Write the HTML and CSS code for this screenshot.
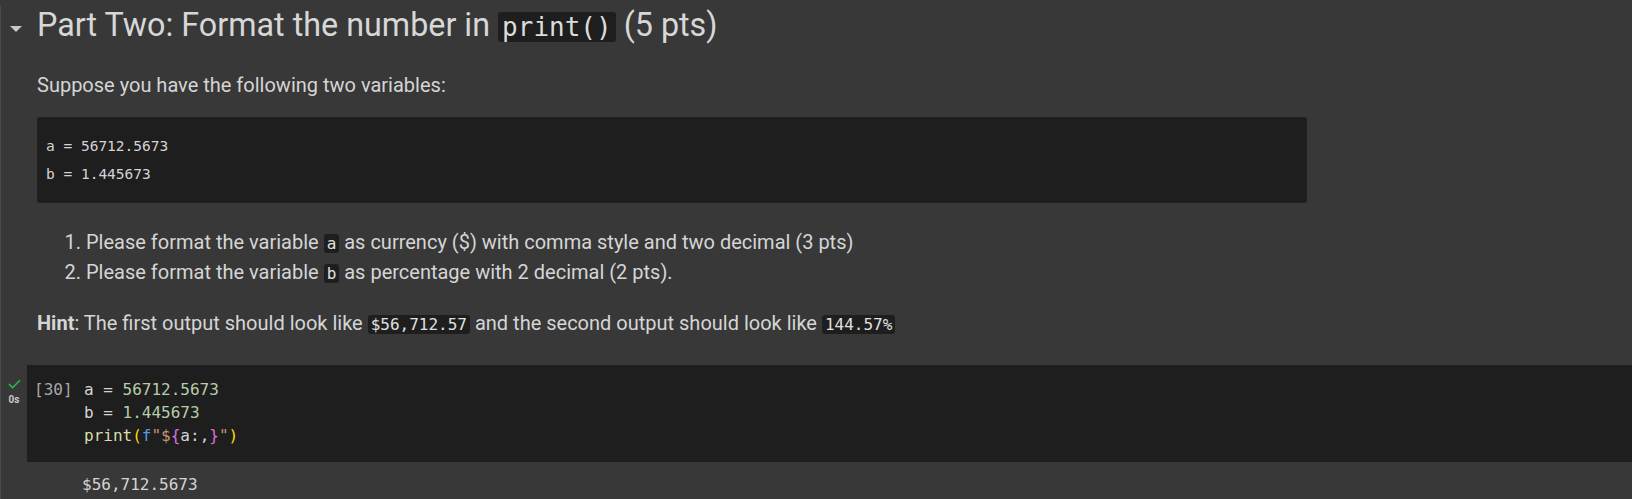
FILE: index.html
```html
<!DOCTYPE html>
<html>
<head>
<meta charset="utf-8">
<link rel="stylesheet" href="styles.css">
</head>
<body>
<div class="nb">
  <div class="md-cell">
    <div class="md-head">
      <div class="caret-col"><span class="caret"></span></div>
      <h2 class="title">Part Two: Format the number in <code class="chip-h">print()</code> (5 pts)</h2>
    </div>
    <div class="md-body">
      <p class="p1">Suppose you have the following two variables:</p>
      <pre class="md-code">a = 56712.5673
b = 1.445673</pre>
      <ol class="tasks">
        <li>Please format the variable <code class="chip">a</code> as currency ($) with comma style and two decimal (3 pts)</li>
        <li>Please format the variable <code class="chip">b</code> as percentage with 2 decimal (2 pts).</li>
      </ol>
      <p class="hint"><b>Hint</b>: The first output should look like <code class="chip">$56,712.57</code> and the second output should look like <code class="chip">144.57%</code></p>
    </div>
  </div>
  <div class="code-cell">
    <div class="gutter">
      <svg class="check" width="13" height="10" viewBox="0 0 13 10"><path d="M1 5.2 L4.6 8.6 L12 1.2" fill="none" stroke="#2fb152" stroke-width="1.6"/></svg>
      <span class="dur">0s</span>
    </div>
    <div class="cell-body">
      <div class="input">
        <span class="prompt">[30]</span>
<pre class="src"><span class="v">a</span> = <span class="n">56712.5673</span>
<span class="v">b</span> = <span class="n">1.445673</span>
<span class="fn">print</span><span class="p1c">(</span><span class="kw">f</span><span class="s">"$</span><span class="br">{</span><span class="v">a</span>:,<span class="br">}</span><span class="s">"</span><span class="p1c">)</span></pre>
      </div>
      <div class="output"><pre class="out">$56,712.5673</pre></div>
    </div>
  </div>
</div>
</body>
</html>
```

FILE: styles.css
```css
html, body {
  margin: 0;
  padding: 0;
  background: #383838;
  overflow: hidden;
}
body {
  font-family: Roboto, "Noto Sans", Arial, sans-serif;
  color: #d5d5d5;
}
.nb {
  border-left: 1px solid #4a4a4a;
  height: 499px;
  box-sizing: border-box;
}
.md-head {
  display: flex;
  align-items: flex-start;
  margin-top: 5px;
}
.caret-col {
  width: 36px;
  flex: none;
}
.caret {
  display: block;
  width: 0;
  height: 0;
  margin: 21px 0 0 9px;
  border-left: 6px solid transparent;
  border-right: 6px solid transparent;
  border-top: 6px solid #c8c8c8;
}
.title {
  margin: 0;
  font-size: 32.3px;
  font-weight: 400;
  line-height: 40px;
  color: #d7d7d7;
  white-space: nowrap;
}
.chip-h {
  font-family: "DejaVu Sans Mono", "Liberation Mono", monospace;
  font-size: 26px;
  line-height: 26px;
  background: #1e1e1e;
  border-radius: 3px;
  padding: 0 4px;
  color: #dcdcdc;
}
.md-body {
  padding-left: 36px;
}
.p1 {
  margin: 25px 0 0;
  font-size: 20px;
  line-height: 30px;
}
.md-code {
  margin: 17px 0 0;
  width: 1270px;
  box-sizing: border-box;
  height: 86px;
  padding: 15px 9px 15px;
  background: #1e1e1e;
  border-radius: 3px;
  font-family: "DejaVu Sans Mono", "Liberation Mono", monospace;
  font-size: 14.5px;
  line-height: 28px;
  color: #d4d4d4;
}
.tasks {
  margin: 24px 0 0;
  padding-left: 49px;
  font-size: 20px;
  line-height: 30px;
}
.hint {
  margin: 21px 0 0;
  font-size: 20px;
  line-height: 30px;
  white-space: nowrap;
}
.hint b {
  font-weight: 700;
}
.chip {
  font-family: "DejaVu Sans Mono", "Liberation Mono", monospace;
  font-size: 16px;
  line-height: 16px;
  background: #1e1e1e;
  border-radius: 3px;
  padding: 0 3px;
  color: #e0e0e0;
}
.code-cell {
  display: flex;
  margin-top: 27px;
}
.gutter {
  width: 26px;
  flex: none;
  display: flex;
  flex-direction: column;
  align-items: center;
  padding-top: 14px;
}
.check {
  display: block;
}
.dur {
  margin-top: 5px;
  font-family: Roboto, sans-serif;
  font-size: 10px;
  font-weight: 700;
  line-height: 12px;
  color: #c8c8c8;
}
.cell-body {
  flex: 1;
}
.input {
  display: flex;
  background: #1e1e1e;
  padding: 13px 0 15px;
}
.prompt {
  width: 50px;
  padding-left: 7px;
  flex: none;
  font-family: "DejaVu Sans Mono", "Liberation Mono", monospace;
  font-size: 16px;
  line-height: 23px;
  color: #a8a8a8;
}
.src, .out {
  margin: 0;
  font-family: "DejaVu Sans Mono", "Liberation Mono", monospace;
  font-size: 16px;
  line-height: 23px;
  color: #d4d4d4;
}
.v { color: #d4d4d4; }
.n { color: #b5cea8; }
.fn { color: #dcdcaa; }
.p1c { color: #ffd700; }
.kw { color: #569cd6; }
.s { color: #ce9178; }
.br { color: #da70d6; }
.output {
  padding: 11px 0 0 55px;
}
```
